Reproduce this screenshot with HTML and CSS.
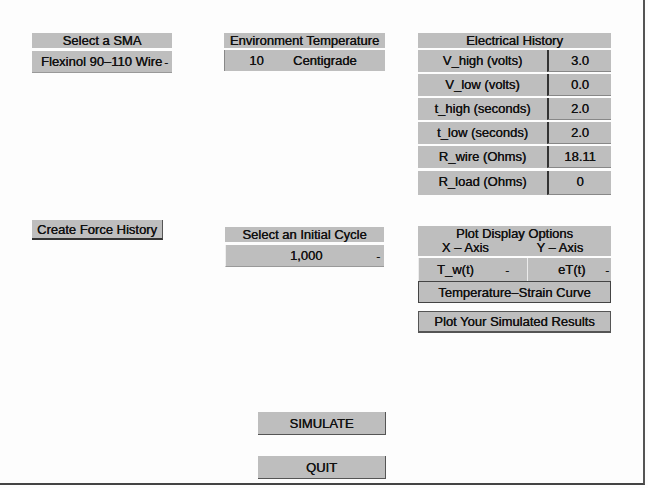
FILE: index.html
```html
<!DOCTYPE html>
<html lang="en">

<head>
    <meta charset="UTF-8">
    <meta name="viewport" content="width=device-width, initial-scale=1.0">
    <title>SMA Simulator</title>
    <link rel="stylesheet" href="styles.css">
</head>

<body>

    <div class="window">
        <div class="panels">
            <!-- cột 1 -->
            <div class="col">
                <div class="box sma">
                    <div class="title">Select a SMA</div>
                    <div class="option wide">
                        <span>Flexinol 90&#8211;110 Wire</span>
                        <span class="dash">-</span>
                    </div>
                </div>
            </div>

            <!-- cột 2 -->
            <div class="col">
                <div class="box env">
                    <div class="title">Environment Temperature</div>
                    <div class="split">
                        <div class="field temp">10</div>
                        <div class="unit">Centigrade</div>
                    </div>
                </div>
            </div>

            <!-- cột 3 -->
            <div class="col">
                <div class="box elec">
                    <div class="title">Electrical History</div>
                    <div class="row"><div class="label">V_high (volts)</div><div class="value">3.0</div></div>
                    <div class="row"><div class="label">V_low (volts)</div><div class="value">0.0</div></div>
                    <div class="row"><div class="label">t_high (seconds)</div><div class="value">2.0</div></div>
                    <div class="row"><div class="label">t_low (seconds)</div><div class="value">2.0</div></div>
                    <div class="row"><div class="label">R_wire (Ohms)</div><div class="value">18.11</div></div>
                    <div class="row last"><div class="label">R_load (Ohms)</div><div class="value">0</div></div>
                </div>
            </div>

            <div class="col">
                <button class="btn force">Create Force History</button>
            </div>

            <div class="col">
                <div class="box cycle">
                    <div class="title">Select an Initial Cycle</div>
                    <div class="option cycle-opt">
                        <span class="cycle-val">1,000</span>
                        <span class="dash">-</span>
                    </div>
                </div>
            </div>

            <div class="col">
                <div class="box plot">
                    <div class="title two">
                        <div>Plot Display Options</div>
                        <div class="axes"><span>X &#8211; Axis</span><span>Y &#8211; Axis</span></div>
                    </div>
                    <div class="axis-row">
                        <div class="axis-opt"><span>T_w(t)</span><span class="dash">-</span></div>
                        <div class="axis-opt"><span>eT(t)</span><span class="dash">-</span></div>
                    </div>
                    <button class="btn curve">Temperature&#8211;Strain Curve</button>
                    <button class="btn results">Plot Your Simulated Results</button>
                </div>
            </div>
        </div>

        <div class="actions">
            <button class="btn action">SIMULATE</button>
            <button class="btn action">QUIT</button>
        </div>
    </div>

</body>

</html>
```

FILE: styles.css
```css
* {
    margin: 0;
    padding: 0;
    box-sizing: border-box;
}

body {
    background-color: #fdfdfd;
    font-family: "Liberation Sans", Arial, sans-serif;
    font-size: 13px;
    color: #111;
}

.window {
    width: 645px;
    height: 485px;
    border-right: 2px solid #555;
    border-bottom: 2px solid #444;
    padding: 33px 0 0 32px;
    overflow: hidden;
}

.panels {
    display: grid;
    grid-template-columns: 192px 194px 194px;
    grid-template-rows: 187px auto;
}

/* nền xám giống màn hình scan */
.title,
.option,
.field,
.unit,
.label,
.value,
.btn,
.axis-opt {
    background-color: #bebebe;
    text-shadow: 0.3px 0 0 #111;
}

.title {
    height: 15px;
    line-height: 15px;
    text-align: center;
    white-space: nowrap;
}

.sma {
    width: 140px;
}

.option {
    margin-top: 3px;
    height: 22px;
    display: flex;
    align-items: center;
    justify-content: space-between;
    padding: 0 4px 0 9px;
    border-bottom: 1px solid #999;
}

.dash {
    font-size: 11px;
}

.env {
    width: 161px;
}

.split {
    margin-top: 2px;
    display: flex;
    height: 21px;
}

.field {
    width: 64px;
    line-height: 21px;
    text-align: center;
    border-left: 1px solid #888;
}

.unit {
    flex: 1;
    line-height: 21px;
    padding-left: 5px;
}

.elec {
    width: 193px;
}

.row {
    display: flex;
    height: 22px;
    margin-top: 2px;
}

.row.last {
    margin-top: 3px;
    height: 24px;
}

.label {
    width: 129px;
    line-height: 22px;
    text-align: center;
}

.value {
    flex: 1;
    line-height: 22px;
    text-align: center;
    border-left: 2px solid #333;
    border-bottom: 1px solid #888;
}

.btn {
    font-family: "Liberation Sans", Arial, sans-serif;
    font-size: 13px;
    color: #111;
    border: none;
    text-align: center;
    white-space: nowrap;
}

.force {
    width: 131px;
    height: 20px;
    border-bottom: 2px solid #333;
    border-right: 1px solid #555;
}

.cycle {
    width: 159px;
    margin-top: 7px;
    margin-left: 1px;
}

.cycle-opt {
    padding-left: 0;
    border-left: 1px solid #eee;
}

.cycle-val {
    flex: 1;
    text-align: center;
    padding-left: 10px;
}

.plot {
    width: 193px;
    margin-top: 6px;
}

.title.two {
    height: 30px;
    line-height: 14px;
    padding-top: 1px;
}

.axes {
    display: flex;
    justify-content: space-around;
    padding-right: 4px;
}

.axis-row {
    display: flex;
    margin-top: 2px;
    height: 23px;
}

.axis-opt {
    display: flex;
    align-items: center;
    justify-content: space-between;
    padding: 0 2px 0 18px;
    border-left: 1px solid #ececec;
}

.axis-opt:first-child {
    width: 109px;
    padding-right: 18px;
}

.axis-opt:last-child {
    flex: 1;
    padding-left: 30px;
}

.curve {
    display: block;
    width: 193px;
    height: 22px;
    border: 1px solid #444;
}

.results {
    display: block;
    width: 193px;
    height: 22px;
    margin-top: 8px;
    border: 1px solid #555;
    border-bottom-width: 2px;
}

.actions {
    margin: 79px 0 0 226px;
    display: flex;
    flex-direction: column;
    gap: 21px;
}

.action {
    width: 128px;
    height: 23px;
    border-right: 1px solid #555;
    border-bottom: 1px solid #555;
}
```
